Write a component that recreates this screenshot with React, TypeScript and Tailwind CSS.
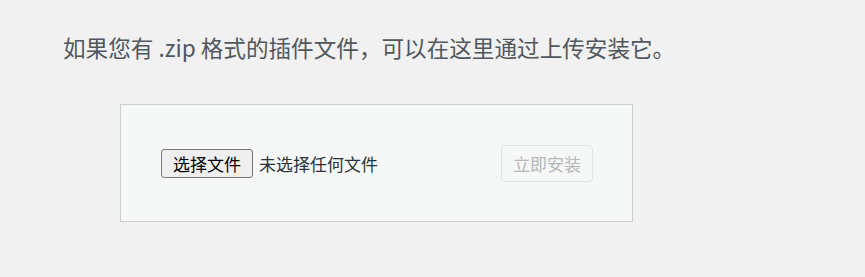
export default function App() {
  return (
    <div className="min-h-[277px] w-full bg-[#f1f1f1] pl-[63px] pt-[33px] font-['Noto_Sans_CJK_SC','Noto_Sans',sans-serif]">
      {/* Install help */}
      <p className="text-[22.6px] leading-[30px] text-[#50575e]">
        如果您有 .zip 格式的插件文件，可以在这里通过上传安装它。
      </p>

      {/* Upload form */}
      <form className="mt-[41px] ml-[57px] flex h-[118px] w-[513px] items-center justify-between border border-[#cdcecf] bg-[#f6f7f7] pl-[40px] pr-[39px]">
        <div className="flex items-center">
          <button
            type="button"
            className="flex h-[29px] w-[92px] items-center justify-center rounded-[3px] border border-[#767676] bg-[#efefef] text-[17px] leading-none text-black"
          >
            选择文件
          </button>
          <span className="ml-[6px] text-[17px] leading-none text-[#2c3338]">未选择任何文件</span>
        </div>
        <button
          type="button"
          disabled
          className="flex h-[37px] w-[92px] items-center justify-center rounded-[4px] border border-[#e3e4e5] bg-[#f6f7f7] text-[17px] leading-none text-[#b4b6b8]"
        >
          立即安装
        </button>
      </form>
    </div>
  )
}
